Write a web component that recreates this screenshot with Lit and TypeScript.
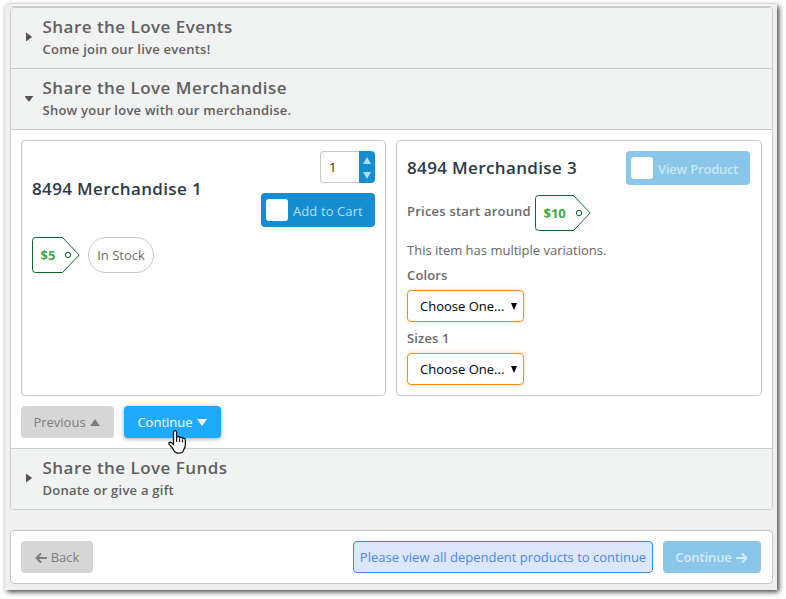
import { css, html, LitElement, svg } from "lit";
import { customElement, property } from "lit/decorators.js";
import { classMap } from "lit/directives/class-map.js";

interface Section {
  title: string;
  subtitle: string;
  open: boolean;
}

const SECTIONS: Section[] = [
  { title: "Share the Love Events", subtitle: "Come join our live events!", open: false },
  { title: "Share the Love Merchandise", subtitle: "Show your love with our merchandise.", open: true },
  { title: "Share the Love Funds", subtitle: "Donate or give a gift", open: false },
];

const VARIATIONS = ["Colors", "Sizes 1"];

@customElement("price-tag")
export class PriceTag extends LitElement {
  static styles = css`
    :host {
      display: block;
      flex: none;
    }

    svg {
      display: block;
    }

    .outline,
    .hole {
      fill: none;
      stroke: #0d6431;
    }

    .amount {
      fill: #3aab47;
      font: 700 13px "Open Sans", sans-serif;
    }
  `;

  @property({ type: Number })
  amount = 0;

  render() {
    const label = `$${this.amount}`;
    const width = label.length > 2 ? 56 : 48;
    const shoulder = width - 17.5;
    return html`
      <svg width=${width} height="36">
        ${svg`
          <path class="outline" d="M3.5 .5H${shoulder}L${width - 0.8} 18L${shoulder} 35.5H3.5Q.5 35.5 .5 32.5V3.5Q.5 .5 3.5 .5Z" />
          <circle class="hole" cx=${width - 12} cy="18" r="2.7" />
          <text class="amount" x="8.5" y="23">${label}</text>
        `}
      </svg>
    `;
  }
}

@customElement("app-root")
export class AppRoot extends LitElement {
  static styles = css`
    :host {
      display: block;
      box-sizing: border-box;
      width: 786px;
      height: 599px;
      padding: 4px 9px 9px 5px;
      overflow: hidden;
      background: #fff;
      color: #606060;
      font: 13px/20px "Open Sans", sans-serif;
    }

    * {
      box-sizing: border-box;
    }

    .window {
      position: relative;
      height: 586px;
      padding: 1px 4px 6px 5px;
      background: #efefef;
      box-shadow: 2px 2px 5px rgba(0, 0, 0, 0.75);
    }

    .previous-panel {
      height: 2px;
      margin: 0 2px;
      background: #fff;
      border-bottom: 1px solid #c8c8c8;
    }

    .accordion {
      height: 503px;
      border: 1px solid #c8cccb;
      border-radius: 4px;
      background: #fff;
      overflow: hidden;
    }

    .section-header {
      display: flex;
      align-items: center;
      height: 61px;
      padding: 0 0 2px 14px;
      background: #f1f3f3;
      border-bottom: 1px solid #c8cccb;
    }

    .section-header.last {
      border-top: 1px solid #c8cccb;
      border-bottom: none;
    }

    .marker {
      width: 9px;
      height: 10px;
      margin-right: 8.5px;
      fill: #555;
    }

    .section-title {
      font-size: 17px;
      font-weight: 600;
      line-height: 24px;
      letter-spacing: 0.47px;
    }

    .section-subtitle {
      font-weight: 600;
      line-height: 20px;
      letter-spacing: 0.24px;
    }

    .section-body {
      height: 318px;
      padding: 10px;
    }

    .products {
      display: grid;
      grid-template-columns: 365px 366px;
      gap: 10px;
      height: 256px;
    }

    .card {
      padding: 10px;
      border: 1px solid #c8c8c8;
      border-radius: 4px;
    }

    .card-header {
      display: flex;
      align-items: center;
      justify-content: space-between;
      margin-bottom: 10px;
    }

    .card-title {
      color: #2c3a49;
      font-size: 17px;
      font-weight: 600;
      letter-spacing: 0.36px;
    }

    .purchase {
      display: flex;
      flex-direction: column;
      align-items: flex-end;
      gap: 10px;
    }

    .quantity {
      display: flex;
      width: 55px;
      height: 32px;
    }

    .quantity-value {
      flex: 1;
      padding-left: 8px;
      border: 1px solid #c8c8c8;
      border-right: none;
      border-radius: 4px 0 0 4px;
      color: #222;
      line-height: 31px;
    }

    .stepper {
      display: flex;
      flex-direction: column;
      align-items: center;
      justify-content: center;
      gap: 8px;
      width: 16px;
      padding-top: 1px;
      background: #148dd3;
      border-radius: 0 4px 4px 0;
      fill: #b5dcf2;
    }

    .product-button {
      display: flex;
      align-items: center;
      gap: 5px;
      width: 114px;
      height: 34px;
      padding: 0 5px;
      border-radius: 4px;
      background: #148dd3;
      color: #b9def4;
      letter-spacing: 0.1px;
      white-space: nowrap;
    }

    .product-button.muted {
      width: 124px;
      margin-right: 1px;
      background: #89c6e9;
      color: #cbe6f6;
      font-weight: 600;
      letter-spacing: -0.2px;
    }

    .product-label {
      padding-top: 2px;
    }

    .checkbox {
      flex: none;
      width: 22px;
      height: 22px;
      border-radius: 3px;
      background: #fff;
    }

    .price-row {
      display: flex;
      align-items: center;
      gap: 8px;
      height: 36px;
    }

    .price-row.from {
      gap: 4px;
    }

    .price-label,
    .field-label {
      font-weight: 600;
      color: #6a6a6a;
    }

    .price-label {
      padding-bottom: 4px;
      letter-spacing: 0.22px;
    }

    .stock {
      width: 66px;
      height: 36px;
      border: 1px solid #c8c8c8;
      border-radius: 18px;
      line-height: 34px;
      text-align: center;
      color: #6d6d6d;
    }

    .note {
      margin-top: 9px;
      color: #666;
    }

    .field + .field {
      margin-top: 1px;
    }

    .field-label {
      line-height: 30px;
      letter-spacing: 0.15px;
    }

    .select {
      display: flex;
      align-items: center;
      justify-content: space-between;
      width: 117px;
      height: 32px;
      padding: 0 6px 0 12px;
      border: 1px solid #ff8c1a;
      border-radius: 4px;
      box-shadow: 0 0 4px rgba(255, 140, 26, 0.35);
      color: #000;
    }

    .actions {
      display: flex;
      gap: 10px;
      margin-top: 10px;
    }

    .button {
      display: flex;
      align-items: center;
      justify-content: center;
      gap: 4px;
      height: 32px;
      border-radius: 4px;
      background: #d6d6d6;
      color: #7d7d7d;
      fill: currentColor;
      stroke: none;
    }

    .button.previous {
      width: 93px;
      padding-right: 2px;
    }

    .button.next {
      width: 97px;
      padding-right: 1px;
      background: #1eabff;
      color: #fff;
      box-shadow: 0 1px 4px rgba(0, 0, 0, 0.35);
    }

    .button.back {
      width: 72px;
    }

    .button.finish {
      width: 98px;
      padding-right: 1px;
      background: #89c6e9;
      color: #d5ebf8;
      font-weight: 600;
      letter-spacing: -0.1px;
    }

    .actions .button svg {
      margin-top: 1px;
    }

    .arrow {
      fill: none;
      stroke: currentColor;
      stroke-width: 2;
      stroke-linecap: round;
      stroke-linejoin: round;
      margin-top: 1px;
    }

    .footer {
      display: flex;
      align-items: center;
      gap: 10px;
      height: 54px;
      margin-top: 20px;
      padding: 0 11px 0 10px;
      border: 1px solid #c8c8c8;
      border-radius: 4px;
      background: #fff;
    }

    .notice {
      width: 300px;
      height: 32px;
      margin-left: auto;
      border: 1px solid #4285f4;
      border-radius: 4px;
      background: #dce7fd;
      color: #4d86ef;
      line-height: 30px;
      text-align: center;
      white-space: nowrap;
    }

    .cursor {
      position: absolute;
      left: 163px;
      top: 426px;
    }
  `;

  private renderSectionHeader(section: Section, last = false) {
    return html`
      <div class=${classMap({ "section-header": true, last })}>
        <svg class="marker" viewBox="0 0 9 10">
          <path d=${section.open ? "M-.5 3H8.5L4 9Z" : "M1 .5L7.2 5L1 9.5Z"} />
        </svg>
        <div>
          <div class="section-title">${section.title}</div>
          <div class="section-subtitle">${section.subtitle}</div>
        </div>
      </div>
    `;
  }

  private renderField(label: string) {
    return html`
      <div class="field">
        <div class="field-label">${label}</div>
        <div class="select">
          <span>Choose One...</span>
          <svg width="6" height="7"><path d="M0 0H6L3 7Z" /></svg>
        </div>
      </div>
    `;
  }

  private renderStockedProduct() {
    return html`
      <div class="card">
        <div class="card-header">
          <div class="card-title">8494 Merchandise 1</div>
          <div class="purchase">
            <div class="quantity">
              <div class="quantity-value">1</div>
              <div class="stepper">
                <svg width="8" height="7"><path d="M4 0L8 7H0Z" /></svg>
                <svg width="8" height="7"><path d="M0 0H8L4 7Z" /></svg>
              </div>
            </div>
            <div class="product-button">
              <span class="checkbox"></span>
              <span class="product-label">Add to Cart</span>
            </div>
          </div>
        </div>
        <div class="price-row">
          <price-tag .amount=${5}></price-tag>
          <div class="stock">In Stock</div>
        </div>
      </div>
    `;
  }

  private renderVariedProduct() {
    return html`
      <div class="card">
        <div class="card-header">
          <div class="card-title">8494 Merchandise 3</div>
          <div class="product-button muted">
            <span class="checkbox"></span>
            <span class="product-label">View Product</span>
          </div>
        </div>
        <div class="price-row from">
          <div class="price-label">Prices start around</div>
          <price-tag .amount=${10}></price-tag>
        </div>
        <div class="note">This item has multiple variations.</div>
        ${VARIATIONS.map((label) => this.renderField(label))}
      </div>
    `;
  }

  render() {
    const [events, merchandise, funds] = SECTIONS;
    return html`
      <div class="window">
        <div class="previous-panel"></div>
        <div class="accordion">
          ${this.renderSectionHeader(events)} ${this.renderSectionHeader(merchandise)}
          <div class="section-body">
            <div class="products">${this.renderStockedProduct()} ${this.renderVariedProduct()}</div>
            <div class="actions">
              <div class="button previous">
                Previous
                <svg width="10" height="7"><path d="M5 0L10 7H0Z" /></svg>
              </div>
              <div class="button next">
                Continue
                <svg width="10" height="7"><path d="M0 0H10L5 7Z" /></svg>
              </div>
            </div>
          </div>
          ${this.renderSectionHeader(funds, true)}
        </div>
        <div class="footer">
          <div class="button back">
            <svg class="arrow" width="12" height="10"><path d="M11 5H1.5M5.5 1L1.5 5L5.5 9" /></svg>
            Back
          </div>
          <div class="notice">Please view all dependent products to continue</div>
          <div class="button finish">
            Continue
            <svg class="arrow" width="12" height="10"><path d="M1 5H10.5M6.5 1L10.5 5L6.5 9" /></svg>
          </div>
        </div>
        <svg class="cursor" width="19" height="24" viewBox="0 0 19 24">
          <path
            d="M5.5 14.5V2.6Q5.5 .7 7 .7Q8.6 .7 8.6 2.6V8Q8.7 6.4 10.2 6.5Q11.6 6.6 11.6 8.2Q11.9 7 13.2 7.2Q14.5 7.4 14.5 9Q14.9 8 16 8.2Q17.4 8.5 17.4 10.5V14.5Q17.4 17.5 15.5 20Q15 23.2 11 23.2Q7 23.2 5.8 20.5Q4.8 18.2 2.4 15.8Q.5 14 1 12.9Q2 11.6 3.8 12.9Z"
            fill="#fff"
            stroke="#15151f"
            stroke-width="1.3"
          />
          <path d="M8.6 8V12M11.6 8.5V12M14.5 9.5V12.5" fill="none" stroke="#15151f" stroke-width="1.2" />
        </svg>
      </div>
    `;
  }
}

declare global {
  interface HTMLElementTagNameMap {
    "app-root": AppRoot;
    "price-tag": PriceTag;
  }
}
